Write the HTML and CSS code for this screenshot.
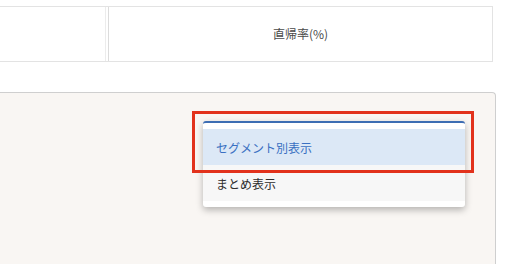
FILE: index.html
```html
<!DOCTYPE html>
<html lang="ja">
<head>
<meta charset="utf-8">
<link rel="stylesheet" href="styles.css">
</head>
<body>
<div class="page">
  <div class="table">
    <div class="cell cell-first"></div>
    <div class="cell cell-main">直帰率(%)</div>
  </div>
  <div class="panel">
    <div class="menu">
      <div class="menu-item active">セグメント別表示</div>
      <div class="menu-item">まとめ表示</div>
    </div>
    <div class="highlight"></div>
  </div>
</div>
</body>
</html>
```
FILE: styles.css
```css
html, body {
  margin: 0;
  padding: 0;
  background: #ffffff;
  overflow: hidden;
}
body {
  font-family: "Noto Sans CJK JP", "Noto Sans", sans-serif;
  font-size: 12px;
  color: #333;
}
.page {
  width: 515px;
  height: 264px;
  padding-top: 6px;
  box-sizing: border-box;
  overflow: hidden;
}
.table {
  display: flex;
  width: 493px;
  height: 56px;
  border-top: 1px solid #e3e3e3;
  border-bottom: 1px solid #e3e3e3;
  border-right: 1px solid #e3e3e3;
  box-sizing: border-box;
  gap: 2px;
}
.cell {
  display: flex;
  align-items: center;
  justify-content: center;
}
.cell-first {
  width: 105px;
  border-right: 1px solid #ececec;
}
.cell-main {
  flex: 1;
  border-left: 1px solid #dcdcdc;
  color: #4a4a4a;
  font-size: 12px;
  padding-bottom: 1px;
}
.panel {
  position: relative;
  margin-top: 30px;
  width: 496px;
  height: 172px;
  background: #f9f6f3;
  border-top: 1px solid #cfcfcf;
  border-right: 1px solid #cfcfcf;
  border-top-right-radius: 4px;
  box-sizing: border-box;
  padding-top: 28px;
}
.menu {
  margin-left: 203px;
  width: 262px;
  background: #ffffff;
  border-top: 2px solid #3d6db3;
  border-radius: 3px;
  padding: 6px 0;
  box-shadow: 0 3px 7px rgba(0, 0, 0, 0.28);
}
.menu-item {
  height: 36px;
  display: flex;
  align-items: center;
  padding-left: 13px;
  background: #f7f7f7;
  color: #2e2e2e;
}
.menu-item.active {
  background: #dce8f6;
  color: #3a70c2;
}
.highlight {
  position: absolute;
  left: 192px;
  top: 18px;
  width: 282px;
  height: 62px;
  border: 3px solid #e2321c;
  box-sizing: border-box;
}
```
